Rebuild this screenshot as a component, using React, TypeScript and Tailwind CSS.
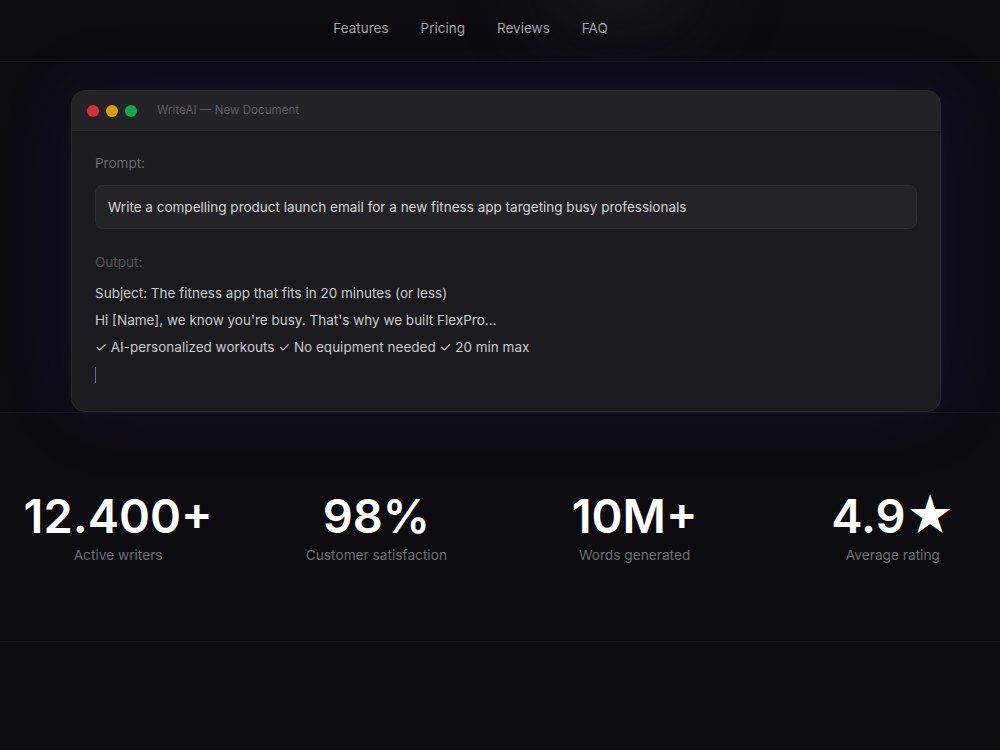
import * as React from 'react';

// ============================================================================
// DATA
// ============================================================================

const navLinks = ['Features', 'Pricing', 'Reviews', 'FAQ'];

const stats = [
  { value: '12.400+', label: 'Active writers' },
  { value: '98%', label: 'Customer satisfaction' },
  { value: '10M+', label: 'Words generated' },
  { value: '4.9★', label: 'Average rating' },
];

const outputLines = [
  'Subject: The fitness app that fits in 20 minutes (or less)',
  "Hi [Name], we know you're busy. That's why we built FlexPro...",
  '✓ AI-personalized workouts ✓ No equipment needed ✓ 20 min max',
];

// ============================================================================
// COMPONENTS
// ============================================================================

function EditorWindow(): React.JSX.Element {
  return (
    <div className="ml-[71px] w-[870px] overflow-hidden rounded-[14px] border border-[#2a2a30] bg-[#1b1b1f] shadow-[0_0_70px_rgba(76,52,170,0.16)]">
      {/* Title bar */}
      <div className="flex h-[40px] items-center border-b border-[#2a2a2f] bg-[#232327] px-[15px]">
        <div className="flex items-center gap-[7px]">
          <span className="h-3 w-3 rounded-full bg-[#d5303e]" />
          <span className="h-3 w-3 rounded-full bg-[#d69c12]" />
          <span className="h-3 w-3 rounded-full bg-[#17a64a]" />
        </div>
        <span className="ml-[20px] text-[11.6px] text-[#5e5e66]">WriteAI — New Document</span>
      </div>

      {/* Body */}
      <div className="px-[23px] pt-[22px] pb-[23px] text-[13.5px]">
        <p className="leading-5 text-[#6a6a72]">Prompt:</p>
        <div className="mt-3 flex h-[44px] items-center rounded-lg border border-[#2f2f35] bg-[#242428] px-3 text-[#d4d4d8]">
          Write a compelling product launch email for a new fitness app targeting busy professionals
        </div>

        <p className="mt-[23px] leading-5 text-[#55555c]">Output:</p>
        <div className="mt-2 leading-[27px] text-[#c9c9ce]">
          {outputLines.map((line) => (
            <p key={line}>{line}</p>
          ))}
          <div className="flex h-[27px] items-center">
            <span className="h-4 w-px bg-[#6d5bb8]" />
          </div>
        </div>
      </div>
    </div>
  );
}

export default function App(): React.JSX.Element {
  return (
    <div className="relative min-h-[750px] overflow-hidden bg-[#0b0b10] font-['Inter',sans-serif]">
      {/* Faint top glow */}
      <div className="pointer-events-none absolute left-[540px] top-[-60px] h-[90px] w-[160px] rounded-full bg-[#2a2a35]/40 blur-2xl" />

      {/* Nav */}
      <nav className="relative flex h-[62px] justify-center border-b border-[#141419] pr-[59px] pt-[18px]">
        <div className="flex gap-8 text-[13.5px] leading-5 text-[#a3a3ab]">
          {navLinks.map((link) => (
            <a key={link} href="#">
              {link}
            </a>
          ))}
        </div>
      </nav>

      {/* Hero / editor preview */}
      <section className="relative border-b border-[#16151c] bg-[#0c0b12] pt-[28px]">
        <EditorWindow />
      </section>

      {/* Stats */}
      <section className="border-b border-[#15141a] pt-[79px] pb-[76px]">
        <div className="ml-[-11px] grid w-[1033px] grid-cols-4">
          {stats.map((stat) => (
            <div key={stat.label} className="flex flex-col items-center">
              <span className="text-[47px] leading-none font-semibold text-white">{stat.value}</span>
              <span className="mt-1.5 text-[13.7px] leading-5 text-[#6f6f77]">{stat.label}</span>
            </div>
          ))}
        </div>
      </section>
    </div>
  );
}
